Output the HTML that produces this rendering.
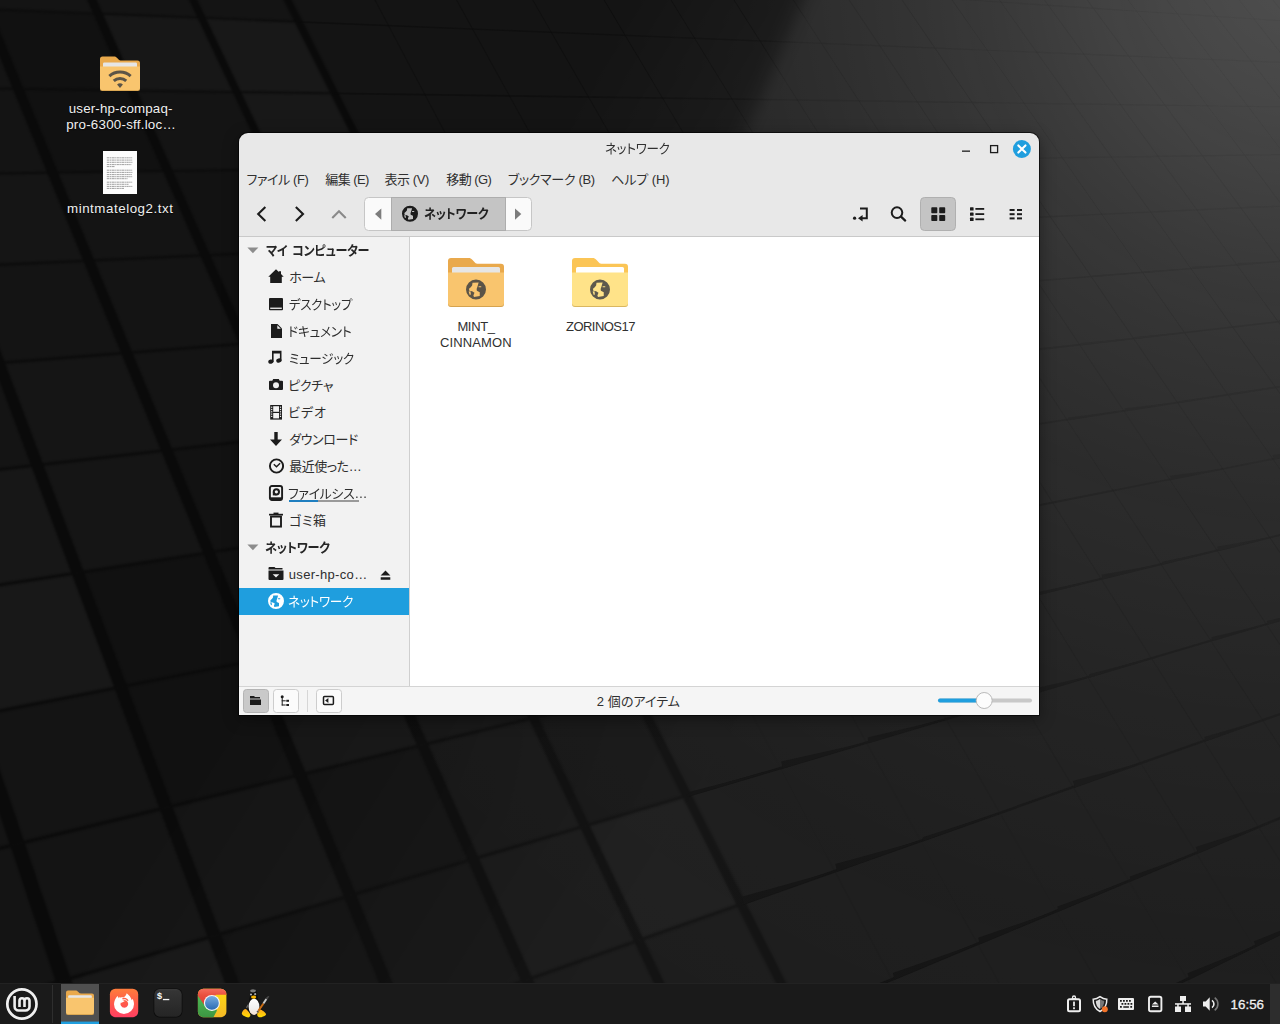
<!DOCTYPE html>
<html lang="ja">
<head>
<meta charset="utf-8">
<title>ネットワーク</title>
<style>
*{box-sizing:border-box;margin:0;padding:0}
html,body{width:1280px;height:1024px;overflow:hidden;background:#151515}
body{position:relative;font-family:"Liberation Sans","Noto Sans CJK JP",sans-serif;font-size:13px;color:#2e2e2e;font-feature-settings:"palt";-webkit-font-smoothing:antialiased}
.abs{position:absolute}
#wall{position:absolute;left:0;top:0;width:1280px;height:1024px}
/* desktop icons */
.dlabel{position:absolute;color:#f0f0f0;text-align:center;font-size:13.33px;line-height:16px;white-space:nowrap;text-shadow:0 1px 1px rgba(0,0,0,.7)}
/* window */
#win{position:absolute;left:239px;top:133px;width:800px;height:582px;background:#e8e8e8;border-radius:9px 9px 0 0;box-shadow:0 0 0 1px rgba(0,0,0,.6),0 4px 16px rgba(0,0,0,.4);overflow:hidden}
#title{position:absolute;left:0;top:0;width:800px;height:31px;text-align:center;line-height:30px;color:#303030}
#menubar{position:absolute;left:0;top:32px;height:28px;width:800px}
#menubar span{position:absolute;top:1px;line-height:28px;white-space:nowrap;color:#303030}
#toolbar{position:absolute;left:0;top:60px;width:800px;height:43px}
#hline{position:absolute;left:0;top:103px;width:800px;height:1px;background:#c9c9c9}
#side{position:absolute;left:0;top:104px;width:170px;height:449px;background:#f2f2f2}
#sep{position:absolute;left:170px;top:104px;width:1px;height:449px;background:#cfcfcf}
#content{position:absolute;left:171px;top:104px;width:629px;height:449px;background:#fff}
#status{position:absolute;left:0;top:553px;width:800px;height:29px;background:#f5f5f5;border-top:1px solid #d4d4d4}
.srow{position:absolute;left:0;width:170px;height:27px;line-height:27px;white-space:nowrap}
.srow .lb{position:absolute;left:50px;top:0}
.shead{position:absolute;left:26px;top:0;font-weight:bold;color:#262626;line-height:27px;height:27px;white-space:nowrap}
.ficon{position:absolute;text-align:center;color:#303030;line-height:16px;white-space:nowrap}
/* panel */
#panel{position:absolute;left:0;top:983px;width:1280px;height:41px;background:#1a1a1a;border-top:1px solid #222}
</style>
</head>
<body>
<svg id="wall" viewBox="0 0 1280 1024">
<defs>
<radialGradient id="lg" cx="1300" cy="-30" r="1200" gradientUnits="userSpaceOnUse">
<stop offset="0" stop-color="#fff" stop-opacity=".25"/><stop offset=".12" stop-color="#fff" stop-opacity=".215"/><stop offset=".23" stop-color="#fff" stop-opacity=".17"/><stop offset=".31" stop-color="#fff" stop-opacity=".14"/><stop offset=".39" stop-color="#fff" stop-opacity=".118"/><stop offset=".46" stop-color="#fff" stop-opacity=".1"/><stop offset=".62" stop-color="#fff" stop-opacity=".072"/><stop offset=".82" stop-color="#fff" stop-opacity=".05"/><stop offset="1" stop-color="#fff" stop-opacity=".04"/>
</radialGradient>
<linearGradient id="eg" gradientUnits="userSpaceOnUse" x1="432.100" y1="269.700" x2="872.900" y2="544.900">
<stop offset="0" stop-color="#000"/><stop offset="1" stop-color="#fff"/>
</linearGradient>
<linearGradient id="vf" gradientUnits="userSpaceOnUse" x1="0" y1="280" x2="0" y2="820">
<stop offset="0" stop-color="#fff" stop-opacity="1"/><stop offset="1" stop-color="#fff" stop-opacity="0"/>
</linearGradient>
<filter id="b1" color-interpolation-filters="sRGB" x="0" y="0" width="100%" height="100%"><feGaussianBlur stdDeviation="1.1"/></filter>
<filter id="b8" color-interpolation-filters="sRGB" x="-10%" y="-10%" width="120%" height="120%"><feGaussianBlur stdDeviation="9"/></filter>
<linearGradient id="gg" gradientUnits="userSpaceOnUse" x1="900" y1="800" x2="1250" y2="150">
<stop offset="0" stop-color="#fff"/><stop offset=".5" stop-color="#999"/><stop offset="1" stop-color="#6a6a6a"/>
</linearGradient>
<linearGradient id="gg2" gradientUnits="userSpaceOnUse" x1="700" y1="900" x2="1150" y2="250">
<stop offset="0" stop-color="#1a1a1a"/><stop offset=".5" stop-color="#444"/><stop offset="1" stop-color="#aaa"/>
</linearGradient>
<mask id="em" maskUnits="userSpaceOnUse" x="0" y="0" width="1280" height="1024"><rect width="1280" height="1024" fill="url(#eg)"/><polygon points="817,-30 1400,-30 1400,1100 312,1100" fill="url(#vf)" filter="url(#b8)"/></mask>
<mask id="gm2" maskUnits="userSpaceOnUse" x="0" y="0" width="1280" height="1024"><rect width="1280" height="1024" fill="url(#gg2)"/></mask>
<mask id="gm" maskUnits="userSpaceOnUse" x="0" y="0" width="1280" height="1024"><rect width="1280" height="1024" fill="url(#gg)"/></mask>
</defs>
<rect width="1280" height="1024" fill="#141414"/>
<path d="M-226 620L-67 595L-26 716L-189 748Z" fill="#000" fill-opacity="0.15"/><path d="M-105 1030L63 980L112 1126L-59 1187Z" fill="#000" fill-opacity="0.15"/><path d="M-208 177L-72 175L-37 266L-175 273Z" fill="#fff" fill-opacity="0.02"/><path d="M-175 273L-37 266L-1 363L-141 374Z" fill="#000" fill-opacity="0.15"/><path d="M-105 482L37 465L78 573L-67 595Z" fill="#fff" fill-opacity="0.014"/><path d="M-67 595L78 573L121 687L-26 716Z" fill="#fff" fill-opacity="0.02"/><path d="M63 980L214 936L266 1072L112 1126Z" fill="#fff" fill-opacity="0.014"/><path d="M-72 175L53 173L89 261L-37 266Z" fill="#fff" fill-opacity="0.008"/><path d="M-1 363L127 353L167 450L37 465Z" fill="#fff" fill-opacity="0.008"/><path d="M37 465L167 450L209 553L78 573Z" fill="#fff" fill-opacity="0.008"/><path d="M78 573L209 553L254 661L121 687Z" fill="#000" fill-opacity="0.1"/><path d="M121 687L254 661L300 775L166 808Z" fill="#000" fill-opacity="0.15"/><path d="M214 936L350 896L403 1024L266 1072Z" fill="#000" fill-opacity="0.15"/><path d="M-76 -140L34 -130L65 -60L-46 -67Z" fill="#fff" fill-opacity="0.008"/><path d="M-14 9L98 14L132 91L18 89Z" fill="#000" fill-opacity="0.1"/><path d="M18 89L132 91L168 171L53 173Z" fill="#000" fill-opacity="0.15"/><path d="M167 450L285 436L329 534L209 553Z" fill="#000" fill-opacity="0.06"/><path d="M209 553L329 534L374 637L254 661Z" fill="#000" fill-opacity="0.06"/><path d="M254 661L374 637L422 745L300 775Z" fill="#fff" fill-opacity="0.008"/><path d="M300 775L422 745L473 859L350 896Z" fill="#000" fill-opacity="0.1"/><path d="M350 896L473 859L527 980L403 1024Z" fill="#000" fill-opacity="0.06"/><path d="M34 -130L136 -121L168 -53L65 -60Z" fill="#fff" fill-opacity="0.008"/><path d="M98 14L202 18L237 92L132 91Z" fill="#fff" fill-opacity="0.014"/><path d="M168 171L274 169L312 250L205 255Z" fill="#000" fill-opacity="0.06"/><path d="M205 255L312 250L352 335L244 344Z" fill="#000" fill-opacity="0.06"/><path d="M285 436L394 424L438 517L329 534Z" fill="#fff" fill-opacity="0.008"/><path d="M329 534L438 517L485 615L374 637Z" fill="#000" fill-opacity="0.06"/><path d="M473 859L585 826L639 940L527 980Z" fill="#fff" fill-opacity="0.008"/><path d="M136 -121L231 -113L264 -47L168 -53Z" fill="#fff" fill-opacity="0.014"/><path d="M202 18L298 22L334 93L237 92Z" fill="#fff" fill-opacity="0.02"/><path d="M237 92L334 93L372 168L274 169Z" fill="#fff" fill-opacity="0.02"/><path d="M274 169L372 168L411 246L312 250Z" fill="#fff" fill-opacity="0.02"/><path d="M352 335L452 327L494 412L394 424Z" fill="#000" fill-opacity="0.1"/><path d="M394 424L494 412L539 501L438 517Z" fill="#fff" fill-opacity="0.014"/><path d="M485 615L586 595L635 693L533 718Z" fill="#fff" fill-opacity="0.02"/><path d="M533 718L635 693L687 796L585 826Z" fill="#000" fill-opacity="0.06"/><path d="M585 826L687 796L741 904L639 940Z" fill="#fff" fill-opacity="0.014"/>
<g filter="url(#b1)"><path d="M-818 -368L-803 -366L-282 2232L-306 2247ZM-658 -347L-645 -345L-38 2072L-58 2085ZM-512 -327L-500 -326L172 1935L155 1946ZM-377 -309L-366 -308L355 1816L339 1826ZM-253 -293L-242 -291L514 1711L501 1720ZM-137 -277L-127 -276L655 1619L643 1627ZM-29 -263L-20 -262L781 1537L770 1544ZM71 -250L79 -249L893 1464L884 1470ZM165 -237L173 -236L995 1398L986 1403Z" fill="#0a0a0a"/><path d="M-810.5 -367.8L168.2 -237.6L168.9 -236.2L-810.1 -365.9ZM-794.7 -288.2L198.8 -176.7L199.5 -175.2L-794.3 -286.2ZM-778.1 -204.3L230.5 -113.4L231.3 -111.8L-777.7 -202.2ZM-760.6 -115.7L263.6 -47.5L264.4 -45.9L-760.1 -113.5ZM-742.0 -22.1L298.0 21.1L298.9 22.7L-741.6 -19.7ZM-722.4 77.2L333.9 92.5L334.8 94.3L-721.9 79.6ZM-701.5 182.4L371.3 167.1L372.2 168.9L-701.0 185.1ZM-679.4 294.4L410.4 244.9L411.3 246.8L-678.8 297.1ZM-655.8 413.5L451.2 326.2L452.2 328.2L-655.2 416.5ZM-630.6 540.7L493.9 411.3L494.9 413.4L-630.0 543.9ZM-603.7 676.7L538.6 500.3L539.7 502.5L-603.0 680.1ZM-574.8 822.6L585.4 593.7L586.6 596.0L-574.1 826.2ZM-543.8 979.3L634.6 691.6L635.8 694.1L-543.0 983.2ZM-510.4 1148.2L686.2 794.6L687.5 797.1L-509.5 1152.4ZM-474.2 1330.7L740.6 902.8L741.9 905.5L-473.3 1335.2ZM-435.1 1528.5L797.8 1016.9L799.2 1019.7L-434.1 1533.5ZM-392.4 1743.8L858.2 1137.2L859.7 1140.2L-391.4 1749.1ZM-345.9 1978.8L922.0 1264.3L923.5 1267.4L-344.7 1984.7ZM-294.9 2236.4L989.4 1398.7L991.1 1402.0L-293.6 2242.9Z" fill="#0b0b0b"/></g>
<g mask="url(#gm2)"><path d="M255.5 -225.3L256.7 -225.2L1083.0 1339.8L1081.7 1340.6ZM337.7 -214.4L338.8 -214.3L1166.7 1285.1L1165.6 1285.8ZM415.0 -204.2L416.0 -204.0L1243.2 1235.2L1242.1 1235.8ZM487.8 -194.5L488.8 -194.4L1313.3 1189.3L1312.3 1190.0ZM556.5 -185.4L557.4 -185.2L1377.8 1147.2L1377.0 1147.7ZM621.5 -176.7L622.4 -176.6L1437.4 1108.2L1436.6 1108.8ZM683.0 -168.6L683.8 -168.5L1492.6 1072.2L1491.9 1072.7ZM741.3 -160.8L742.1 -160.7L1543.9 1038.7L1543.2 1039.1ZM796.7 -153.5L797.5 -153.4L1591.7 1007.5L1591.0 1007.9ZM849.4 -146.5L850.1 -146.4L1636.2 978.3L1635.6 978.7ZM899.5 -139.8L900.2 -139.7L1678.0 951.1L1677.4 951.5ZM947.2 -133.5L947.9 -133.4L1717.1 925.5L1716.6 925.9ZM992.8 -127.4L993.4 -127.4L1753.8 901.5L1753.3 901.8ZM1036.4 -121.7L1037.0 -121.6L1788.4 878.9L1788.0 879.2ZM1078.0 -116.1L1078.6 -116.1L1821.1 857.6L1820.6 857.9ZM1117.8 -110.8L1118.4 -110.8L1851.9 837.4L1851.5 837.7ZM1156.0 -105.8L1156.5 -105.7L1881.1 818.4L1880.7 818.7ZM1192.6 -100.9L1193.1 -100.9L1908.7 800.3L1908.3 800.6ZM1227.7 -96.3L1228.2 -96.2L1934.9 783.2L1934.5 783.4ZM1261.4 -91.8L1261.9 -91.7L1959.8 766.9L1959.5 767.2ZM1293.8 -87.5L1294.3 -87.4L1983.5 751.5L1983.2 751.7ZM1325.0 -83.3L1325.5 -83.3L2006.1 736.7L2005.8 736.9Z" fill="#0a0a0a"/></g>
<g mask="url(#gm)"><path d="M168.2 -237.6L1324.9 -83.7L1325.6 -82.9L168.9 -236.2ZM198.8 -176.7L1355.5 -46.9L1356.2 -46.0L199.5 -175.2ZM230.5 -113.4L1386.8 -9.2L1387.5 -8.2L231.3 -111.8ZM263.6 -47.5L1418.8 29.4L1419.6 30.3L264.4 -45.9ZM298.0 21.1L1451.5 68.9L1452.3 69.8L298.9 22.7ZM333.9 92.5L1485.1 109.3L1485.9 110.2L334.8 94.3ZM371.3 167.1L1519.4 150.6L1520.2 151.6L372.2 168.9ZM410.4 244.9L1554.5 193.0L1555.4 194.0L411.3 246.8ZM451.2 326.2L1590.5 236.3L1591.4 237.4L452.2 328.2ZM493.9 411.3L1627.4 280.8L1628.3 281.8L494.9 413.4ZM538.6 500.3L1665.2 326.3L1666.1 327.4L539.7 502.5ZM585.4 593.7L1704.0 373.0L1704.9 374.2L586.6 596.0ZM634.6 691.6L1743.7 420.9L1744.7 422.1L635.8 694.1ZM686.2 794.6L1784.5 470.0L1785.5 471.2L687.5 797.1ZM740.6 902.8L1826.4 520.5L1827.4 521.7L741.9 905.5ZM797.8 1016.9L1869.3 572.2L1870.4 573.5L799.2 1019.7ZM858.2 1137.2L1913.5 625.4L1914.5 626.7L859.7 1140.2ZM922.0 1264.3L1958.8 680.0L1959.9 681.3L923.5 1267.4ZM989.4 1398.7L2005.4 736.1L2006.5 737.5L991.1 1402.0Z" fill="#0a0a0a" fill-opacity=".9"/><path d="M631.5 313.8L707.7 307.3L707.3 306.6L631.5 310.8ZM711.0 307.4L782.1 301.4L781.8 300.7L711.5 305.4ZM854.7 296.0L917.0 290.7L916.6 290.1L854.7 293.7ZM919.7 290.8L978.3 285.8L977.9 285.2L919.7 288.6ZM980.9 285.9L1036.0 281.2L1035.6 280.6L980.2 283.0ZM1092.6 277.0L1141.7 272.8L1141.3 272.3L1092.7 275.4ZM1143.9 272.9L1190.2 268.9L1189.9 268.4L1143.8 271.4ZM1192.3 269.1L1236.2 265.3L1235.9 264.8L1191.5 266.5ZM1238.2 265.4L1279.9 261.8L1279.5 261.3L1237.4 262.9ZM1281.8 262.0L1321.3 258.5L1320.9 258.0L1281.6 260.5ZM589.2 402.2L671.3 392.3L670.9 391.6L589.1 398.5ZM674.9 392.3L751.2 383.0L750.8 382.3L675.4 390.1ZM828.7 374.5L895.1 366.4L894.7 365.7L828.8 372.0ZM963.0 358.9L1021.3 351.8L1020.9 351.2L962.9 356.6ZM1023.9 351.8L1078.7 345.1L1078.3 344.5L1023.7 349.6ZM1081.1 345.2L1132.7 338.9L1132.3 338.3L1080.9 343.1ZM1135.0 338.9L1183.7 333.0L1183.3 332.4L1134.7 336.9ZM1279.5 322.2L1320.7 317.1L1320.3 316.6L1278.8 320.0ZM634.3 487.6L716.6 474.4L716.2 473.6L634.0 483.4ZM720.1 474.3L796.5 462.0L796.1 461.3L719.3 469.4ZM799.8 461.9L870.9 450.4L870.5 449.7L799.7 458.9ZM874.0 450.4L940.2 439.7L939.8 439.0L873.7 447.3ZM943.1 439.6L1005.1 429.6L1004.7 429.0L942.8 436.7ZM1068.4 420.2L1122.9 411.3L1122.5 410.7L1067.9 417.4ZM1125.3 411.3L1176.6 403.0L1176.2 402.4L1124.5 408.3ZM1178.9 403.0L1227.2 395.2L1226.8 394.6L1178.8 401.2ZM1229.3 395.2L1274.9 387.8L1274.5 387.2L1229.2 393.4ZM588.4 595.4L677.7 577.2L677.2 576.4L587.2 588.8ZM681.5 577.0L763.9 560.1L763.5 559.3L680.1 570.7ZM767.5 559.9L843.8 544.3L843.4 543.5L767.4 556.5ZM847.1 544.1L918.0 529.6L917.6 528.9L846.5 540.0ZM921.1 529.4L987.1 515.9L986.7 515.2L920.4 525.5ZM990.0 515.8L1051.7 503.1L1051.3 502.5L989.2 512.0ZM1171.2 479.9L1222.0 469.4L1221.6 468.8L1169.7 475.8ZM1274.3 459.4L1319.3 450.1L1318.9 449.6L1272.3 455.0ZM637.6 693.4L727.1 670.9L726.6 670.0L636.8 687.4ZM816.9 649.4L893.1 630.2L892.7 629.4L816.8 645.8ZM896.4 629.9L967.1 612.1L966.7 611.4L895.2 624.7ZM1038.9 595.0L1100.1 579.5L1099.7 578.8L1038.4 591.9ZM1102.8 579.3L1160.1 564.9L1159.6 564.2L1101.4 574.7ZM1162.7 564.7L1216.3 551.1L1215.8 550.4L1162.1 561.8ZM1218.7 550.9L1269.0 538.2L1268.6 537.6L1217.1 546.7ZM689.3 796.3L778.9 769.2L778.4 768.3L689.4 792.1ZM782.7 768.6L865.1 743.6L864.6 742.8L781.1 761.6ZM868.7 743.1L944.7 720.0L944.2 719.2L867.4 737.4ZM1021.5 697.8L1086.8 677.9L1086.3 677.1L1019.5 691.7ZM1089.7 677.5L1150.5 659.0L1150.0 658.3L1089.2 674.2ZM1212.5 641.1L1265.6 624.9L1265.1 624.2L1211.4 637.3ZM1268.0 624.7L1317.7 609.5L1317.3 608.8L1266.8 621.0ZM743.7 904.6L833.3 872.3L832.8 871.4L742.1 896.7ZM837.1 871.6L919.3 841.9L918.8 841.0L835.3 864.1ZM922.9 841.3L998.6 813.9L998.1 813.1L922.6 837.2ZM1075.0 787.5L1139.8 764.1L1139.3 763.3L1072.8 781.1ZM1205.7 741.3L1261.8 721.0L1261.3 720.3L1204.5 737.1ZM801.1 1018.7L890.5 980.8L889.9 979.8L799.2 1010.3ZM894.3 979.8L976.2 945.1L975.7 944.1L892.9 973.0ZM979.8 944.2L1055.1 912.3L1054.5 911.4L978.2 937.8ZM1058.4 911.5L1127.8 882.0L1127.3 881.1L1057.3 906.4ZM1130.9 881.3L1195.1 854.0L1194.6 853.2L1129.7 876.4ZM1198.0 853.4L1257.6 828.0L1257.1 827.2L1195.6 846.9ZM1117.5 1014.4L1186.3 980.3L1185.8 979.4L1115.1 1006.8ZM1189.4 979.4L1252.9 947.9L1252.4 947.0L1187.5 973.2ZM1255.7 947.1L1314.6 917.9L1314.1 917.1L1253.8 941.2Z" fill="#0b0b0b"/></g>
<rect width="1280" height="1024" fill="url(#lg)" mask="url(#em)"/>
</svg>

<!-- desktop icons -->
<svg class="abs" style="left:99px;top:55px" width="42" height="38" viewBox="0 0 42 38">
<path d="M1 4a2.500 2.500 0 0 1 2.500-2.500h11.500c1.300 0 2 .400 2.900 1.300l1.700 1.700c.800.800 1.400 1.100 2.700 1.100H38.500A2.500 2.500 0 0 1 41 8.100V14H1z" fill="#e9a94c"/>
<rect x="4" y="7.500" width="34" height="7" rx="1.200" fill="#e6e6e6"/>
<path d="M1 11.500h40V33.500a2.500 2.500 0 0 1-2.500 2.500H3.500A2.500 2.500 0 0 1 1 33.500z" fill="#f9c56e"/>
<path d="M1 33V33.500a2.500 2.500 0 0 0 2.500 2.500H38.500a2.500 2.500 0 0 0 2.500-2.500V33a2.500 2.500 0 0 1-2.500 2.200H3.500A2.500 2.500 0 0 1 1 33z" fill="rgba(150,100,20,.4)"/>
<g fill="none" stroke="#5b5447" stroke-width="3">
<path d="M10.360 21.080A15.900 15.900 0 0 1 31.640 21.080"/><path d="M14.780 25.990A9.300 9.300 0 0 1 27.220 25.990"/>
</g>
<path d="M21 32.900L18.050 29.600A4.400 4.400 0 0 1 23.950 29.600Z" fill="#5b5447"/>
</svg>
<div class="dlabel" id="d1a" style="left:68.8px;top:101px;letter-spacing:0.15px">user-hp-compaq-</div><div class="dlabel" id="d1b" style="left:66.2px;top:117px;letter-spacing:0.24px">pro-6300-sff.loc…</div>
<svg class="abs" style="left:103px;top:151px" width="34" height="43" viewBox="0 0 34 43">
<rect width="34" height="43" fill="#fcfcfc"/>
<g fill="none" stroke="#4a4a4a" stroke-opacity=".8" stroke-width=".650" stroke-dasharray="2.300 .500 1.500 .500 3.100 .500 .900 .500"><path d="M3.800 6.8H29.2"/><path d="M3.800 9.1H29.2"/><path d="M3.800 11.3H29.4"/><path d="M3.800 13.6H28.5"/><path d="M3.800 15.6H11.5"/><path d="M3.800 19.2H29.2"/><path d="M3.800 21.4H29.4"/><path d="M3.800 23.6H29.0"/><path d="M3.800 25.7H29.2"/><path d="M3.800 27.7H24.5"/><path d="M3.800 31.2H29.2"/><path d="M3.800 33.3H25.5"/><path d="M3.800 35.4H29.3"/><path d="M3.800 37.4H21.0"/></g></svg>
<div class="dlabel" id="d2" style="left:67.0px;top:201px;letter-spacing:0.54px">mintmatelog2.txt</div>

<div id="win">
<div id="title"><span class="abs" id="ttl" style="left:366.4px;top:1px;transform-origin:0 50%;transform:scaleX(0.963);letter-spacing:-0.3px;white-space:nowrap">ネットワーク</span></div>
<svg class="abs" style="left:700px;top:0" width="100" height="32" viewBox="939 133 100 32">
<rect x="962" y="150.5" width="8" height="1.3" fill="#1c1c1c"/>
<rect x="990.6" y="145.6" width="7" height="7" fill="none" stroke="#1c1c1c" stroke-width="1.3"/>
<circle cx="1021.9" cy="149" r="9" fill="#1f9ede"/>
<path d="M1018.3 145.4l7.2 7.2M1025.5 145.4l-7.2 7.2" stroke="#fff" stroke-width="2.1" stroke-linecap="round"/>
</svg>
<div id="menubar">
<span id="m1" style="left:7.4px;letter-spacing:-0.39px">ファイル (F)</span>
<span id="m2" style="left:86.2px;letter-spacing:-0.54px">編集 (E)</span>
<span id="m3" style="left:145.4px;letter-spacing:-0.38px">表示 (V)</span>
<span id="m4" style="left:207.2px;letter-spacing:-0.54px">移動 (G)</span>
<span id="m5" style="left:268.8px;letter-spacing:-0.34px">ブックマーク (B)</span>
<span id="m6" style="left:372.2px;letter-spacing:-0.09px">ヘルプ (H)</span>
</div>
<div id="toolbar">
<svg class="abs" style="left:0;top:0" width="800" height="43" viewBox="239 193 800 43">
<g fill="none" stroke="#1c1c1c" stroke-width="2.1" stroke-linecap="square" stroke-linejoin="miter">
<polyline points="264.6,207.8 258.2,214 264.6,220.2"/>
<polyline points="296.6,207.8 303,214 296.6,220.2"/>
<polyline points="333,217.3 339,211.3 345,217.3" stroke="#8a8a8a"/>
</g>
<rect x="364.5" y="197.5" width="167" height="33" rx="4" fill="#fafafa" stroke="#c6c6c6"/>
<rect x="391.5" y="197.5" width="114" height="33" fill="#c4c4c4" stroke="#adadad"/>
<polygon points="381.3,208.5 381.3,219.8 375,214.1" fill="#7c7c7c"/>
<polygon points="515,208.5 515,219.8 521.3,214.1" fill="#7c7c7c"/>
<g transform="translate(402,205.75)"><path fill="#1c1c1c" fill-rule="evenodd" d="M8 0a8 8 0 1 0 0 16a8 8 0 1 0 0-16zM5.2 2.6L10.1 2.4L9.2 5.6L8.5 7.5L8.7 8.9L11 10.1L11 13.2L6.4 13.9L5.9 12.7L6.8 10.6L4.9 9.4L2.6 8.9L2.4 7.3L3.8 6.1L4.9 4.7ZM10.1 5.3h2.1v.9h-2.1zM2.1 9.6L3.6 9.4L3.9 12L3 12.3z"/></g>
<!-- toggle location -->
<g fill="#1c1c1c"><circle cx="854.6" cy="218.2" r="1.6"/><path d="M860 207.5h7.8v11.8h-5.2v2.3l-4.6-3.3 4.6-3.3v2.3h3.2v-7.8h-5.8z"/></g>
<!-- search -->
<circle cx="897" cy="212.6" r="5.3" fill="none" stroke="#1c1c1c" stroke-width="2"/>
<line x1="901" y1="216.6" x2="905.2" y2="220.6" stroke="#1c1c1c" stroke-width="2.2" stroke-linecap="round"/>
<!-- grid button -->
<rect x="920.5" y="197.5" width="35" height="33" rx="4" fill="#c4c4c4" stroke="#b0b0b0"/>
<g fill="#1c1c1c">
<rect x="931.3" y="207.2" width="6" height="6" rx=".8"/><rect x="939.2" y="207.2" width="6" height="6" rx=".8"/>
<rect x="931.3" y="215" width="6" height="6" rx=".8"/><rect x="939.2" y="215" width="6" height="6" rx=".8"/>
<!-- list -->
<rect x="970" y="207.2" width="3.6" height="3.4" rx=".6"/><rect x="975.4" y="208" width="8.8" height="1.8"/>
<rect x="970" y="212.4" width="3.6" height="3.4" rx=".6"/><rect x="975.4" y="213.2" width="8.8" height="1.8"/>
<rect x="970" y="217.6" width="3.6" height="3.4" rx=".6"/><rect x="975.4" y="218.4" width="8.8" height="1.8"/>
<!-- compact -->
<rect x="1009.6" y="209" width="5" height="2"/><rect x="1017" y="209" width="5" height="2"/>
<rect x="1009.6" y="213.2" width="5" height="2"/><rect x="1017" y="213.2" width="5" height="2"/>
<rect x="1009.6" y="217.4" width="5" height="2"/><rect x="1017" y="217.4" width="5" height="2"/>
</g>
</svg>
<div class="abs" id="pb" style="left:185.0px;top:5px;transform-origin:0 50%;transform:scaleX(0.928);letter-spacing:-0.3px;height:33px;line-height:32px;font-weight:bold;color:#222;white-space:nowrap">ネットワーク</div>
</div>
<div id="hline"></div>
<div id="side">
<div class="srow" style="top:0"><svg class="abs" style="left:8px;top:10px" width="12" height="8" viewBox="0 0 12 8"><path d="M.400 .5h11L5.900 6.200z" fill="#8c8c8c"/></svg><span class="shead" id="sh1" style="word-spacing:1.5px;left:27.2px;transform-origin:0 50%;transform:scaleX(0.931);letter-spacing:-0.3px">マイ コンピューター</span></div>
<div class="srow" style="top:27px"><svg class="abs" style="left:29px;top:5px" width="16" height="16" viewBox="0 0 16 16"><path fill="#1c1c1c" d="M8 .2L.3 7.7h1.9V14h11.6V7.7h1.9L13 5.1V2.2h-2.1v.9z"/></svg><span class="lb" id="s1" style="left:50.2px;letter-spacing:-0.43px">ホーム</span></div>
<div class="srow" style="top:54px"><svg class="abs" style="left:29px;top:5px" width="16" height="16" viewBox="0 0 16 16"><rect x="1" y="2" width="14" height="12.2" rx="1" fill="#1c1c1c"/><rect x="2.2" y="11.6" width="11.6" height="1.3" fill="#f2f2f2"/></svg><span class="lb" id="s2" style="left:50.2px;transform-origin:0 50%;transform:scaleX(0.956);letter-spacing:-0.3px">デスクトップ</span></div>
<div class="srow" style="top:81px"><svg class="abs" style="left:29px;top:5px" width="16" height="16" viewBox="0 0 16 16"><path fill="#1c1c1c" d="M3 1h6.5L14 5.5V15H3z"/><path fill="#f2f2f2" d="M9.3 2.2L12.8 5.7H9.3z"/></svg><span class="lb" id="s3" style="left:49.4px;transform-origin:0 50%;transform:scaleX(0.982);letter-spacing:-0.3px">ドキュメント</span></div>
<div class="srow" style="top:108px"><svg class="abs" style="left:29px;top:5px" width="16" height="16" viewBox="0 0 16 16"><path fill="#1c1c1c" d="M4 .8h9.5v9.9h-1.6V3.6H5.6v8.2H4z"/><ellipse cx="2.9" cy="11.6" rx="2.7" ry="2.1" fill="#1c1c1c" transform="rotate(-15 2.9 11.6)"/><ellipse cx="10.9" cy="10.5" rx="2.7" ry="2.1" fill="#1c1c1c" transform="rotate(-15 10.9 10.5)"/></svg><span class="lb" id="s4" style="left:50.4px;transform-origin:0 50%;transform:scaleX(0.969);letter-spacing:-0.3px">ミュージック</span></div>
<div class="srow" style="top:135px"><svg class="abs" style="left:29px;top:5px" width="16" height="16" viewBox="0 0 16 16"><path fill="#1c1c1c" d="M5.2 2h5.6l.9 1.8H14a1 1 0 0 1 1 1V12a1 1 0 0 1-1 1H2a1 1 0 0 1-1-1V4.8a1 1 0 0 1 1-1h2.3z"/><circle cx="8" cy="8.2" r="3" fill="#eee"/></svg><span class="lb" id="s5" style="left:49.0px;letter-spacing:-0.24px">ピクチャ</span></div>
<div class="srow" style="top:162px"><svg class="abs" style="left:29px;top:5px" width="16" height="16" viewBox="0 0 16 16"><rect x="2.2" y="1" width="11.8" height="14.6" fill="#1c1c1c"/><rect x="5.2" y="2.2" width="5.8" height="5.6" fill="#f2f2f2"/><rect x="5.2" y="9" width="5.8" height="5.4" fill="#f2f2f2"/><g fill="#f2f2f2"><rect x="3.1" y="2.6" width="1.2" height="1.2"/><rect x="3.1" y="4.9" width="1.2" height="1.2"/><rect x="3.1" y="7.2" width="1.2" height="1.2"/><rect x="3.1" y="9.5" width="1.2" height="1.2"/><rect x="3.1" y="11.8" width="1.2" height="1.2"/><rect x="11.9" y="2.6" width="1.2" height="1.2"/><rect x="11.9" y="4.9" width="1.2" height="1.2"/><rect x="11.9" y="7.2" width="1.2" height="1.2"/><rect x="11.9" y="9.5" width="1.2" height="1.2"/><rect x="11.9" y="11.8" width="1.2" height="1.2"/></g></svg><span class="lb" id="s6" style="left:49.0px;letter-spacing:0.88px">ビデオ</span></div>
<div class="srow" style="top:189px"><svg class="abs" style="left:29px;top:5px" width="16" height="16" viewBox="0 0 16 16"><path fill="#1c1c1c" d="M6.3 1h3.4v7.4H14L8 15 2 8.4h4.3z"/></svg><span class="lb" id="s7" style="left:50.2px;letter-spacing:-0.38px">ダウンロード</span></div>
<div class="srow" style="top:216px"><svg class="abs" style="left:29px;top:5px" width="16" height="16" viewBox="0 0 16 16"><circle cx="8.5" cy="8" r="6.600" fill="none" stroke="#1c1c1c" stroke-width="1.900"/><path d="M5.8 6.2l2.7 2.6 3.6-3.6" fill="none" stroke="#1c1c1c" stroke-width="1.4"/></svg><span class="lb" id="s8" style="left:50.2px;letter-spacing:-0.46px">最近使った…</span></div>
<div class="srow" style="top:243px"><svg class="abs" style="left:29px;top:5px" width="16" height="16" viewBox="0 0 16 16"><rect x="1.900" y="1" width="12.200" height="14" rx="2" fill="none" stroke="#1c1c1c" stroke-width="1.900"/><rect x="2" y="12.300" width="12" height="2.700" fill="#1c1c1c"/><circle cx="8.400" cy="6.800" r="3.600" fill="#1c1c1c"/><rect x="4.800" y="6.800" width="3.600" height="3.600" fill="#1c1c1c"/><circle cx="8.400" cy="6.800" r="1.600" fill="#f2f2f2"/></svg><span class="lb" id="s9" style="left:49.4px;transform-origin:0 50%;transform:scaleX(0.993);letter-spacing:-0.3px">ファイルシス…</span></div>
<div class="srow" style="top:270px"><svg class="abs" style="left:29px;top:5px" width="16" height="16" viewBox="0 0 16 16"><rect x="1" y="1.8" width="14" height="1.7" fill="#1c1c1c"/><rect x="5.5" y=".6" width="5" height="1.6" fill="#1c1c1c"/><rect x="3" y="4.6" width="10" height="10" fill="none" stroke="#1c1c1c" stroke-width="1.9"/></svg><span class="lb" id="s10" style="left:50.2px;letter-spacing:0.46px">ゴミ箱</span></div>
<div class="abs" style="left:50px;top:263px;width:29px;height:2px;background:#1f7fc0"></div><div class="abs" style="left:79px;top:263px;width:41px;height:2px;background:#9a9a9a"></div>
<div class="srow" style="top:297px"><svg class="abs" style="left:8px;top:10px" width="12" height="8" viewBox="0 0 12 8"><path d="M.400 .5h11L5.900 6.200z" fill="#8c8c8c"/></svg><span class="shead" id="sh2" style="left:25.8px;transform-origin:0 50%;transform:scaleX(0.934);letter-spacing:-0.3px">ネットワーク</span></div>
<div class="srow" style="top:324px"><svg class="abs" style="left:29px;top:5px" width="16" height="16" viewBox="0 0 16 16"><path fill="#1c1c1c" d="M1.5 1h5l1 1h7v1.6H.5V2a1 1 0 0 1 1-1zM.5 4.600h15V13a1 1 0 0 1-1 1H1.500a1 1 0 0 1-1-1z"/><path fill="#f2f2f2" d="M4.700 8.200h6.600L8 11.600z"/></svg><span class="lb" id="s11" style="left:49.8px;letter-spacing:0.32px">user-hp-co…</span><svg class="abs" style="left:141px;top:9px" width="11" height="11" viewBox="0 0 11 11"><path fill="#1c1c1c" d="M5.500 .500L10.400 5.600H.600zM.700 7.200h9.600v2.600H.700z"/></svg></div>
<div class="srow" style="top:351px;background:#1f9ede;color:#fff"><svg class="abs" style="left:29px;top:5px" width="16" height="16" viewBox="0 0 16 16"><path fill="#fff" fill-rule="evenodd" d="M8 0a8 8 0 1 0 0 16a8 8 0 1 0 0-16zM5.2 2.6L10.1 2.4L9.2 5.6L8.5 7.5L8.7 8.9L11 10.1L11 13.2L6.4 13.9L5.9 12.7L6.8 10.6L4.9 9.4L2.6 8.9L2.4 7.3L3.8 6.1L4.9 4.7ZM10.1 5.3h2.1v.9h-2.1zM2.1 9.6L3.6 9.4L3.9 12L3 12.3z"/></svg><span class="lb" id="s12" style="left:49.0px;transform-origin:0 50%;transform:scaleX(0.973);letter-spacing:-0.3px">ネットワーク</span></div>
</div>
<div id="sep"></div>
<div id="content">
<svg class="abs" style="left:37px;top:20px" width="58" height="52" viewBox="0 0 58 52">
<path d="M1 4a3 3 0 0 1 3-3h17.500c1.800 0 2.600.600 3.800 1.800l2.600 2.600c1 1 1.800 1.400 3.400 1.400H54a3 3 0 0 1 3 3V20H1z" fill="#e9a94c"/>
<rect x="5" y="10" width="48" height="10" rx="1.500" fill="#e6e6e6"/>
<path d="M1 15.500h56V47a3 3 0 0 1-3 3H4a3 3 0 0 1-3-3z" fill="#f9c56e"/>
<path d="M1 46.500V47a3 3 0 0 0 3 3H54a3 3 0 0 0 3-3v-.500a3 3 0 0 1-3 2.500H4a3 3 0 0 1-3-2.500z" fill="rgba(150,100,20,.35)"/>
<g transform="translate(19 22.500) scale(1.25)"><path fill="#5b5447" fill-rule="evenodd" d="M8 0a8 8 0 1 0 0 16a8 8 0 1 0 0-16zM5.2 2.6L10.1 2.4L9.2 5.6L8.5 7.5L8.7 8.9L11 10.1L11 13.2L6.4 13.9L5.9 12.7L6.8 10.6L4.9 9.4L2.6 8.9L2.4 7.3L3.8 6.1L4.9 4.7ZM10.1 5.3h2.1v.9h-2.1zM2.1 9.6L3.6 9.4L3.9 12L3 12.3z"/></g>
</svg><svg class="abs" style="left:161px;top:20px" width="58" height="52" viewBox="0 0 58 52">
<path d="M1 4a3 3 0 0 1 3-3h17.500c1.800 0 2.600.600 3.800 1.800l2.600 2.600c1 1 1.800 1.400 3.400 1.400H54a3 3 0 0 1 3 3V20H1z" fill="#fbc556"/>
<rect x="5" y="10" width="48" height="10" rx="1.500" fill="#ffffff"/>
<path d="M1 15.500h56V47a3 3 0 0 1-3 3H4a3 3 0 0 1-3-3z" fill="#ffe389"/>
<path d="M1 46.500V47a3 3 0 0 0 3 3H54a3 3 0 0 0 3-3v-.500a3 3 0 0 1-3 2.500H4a3 3 0 0 1-3-2.500z" fill="rgba(150,100,20,.35)"/>
<g transform="translate(19 22.500) scale(1.25)"><path fill="#5e594d" fill-rule="evenodd" d="M8 0a8 8 0 1 0 0 16a8 8 0 1 0 0-16zM5.2 2.6L10.1 2.4L9.2 5.6L8.5 7.5L8.7 8.9L11 10.1L11 13.2L6.4 13.9L5.9 12.7L6.8 10.6L4.9 9.4L2.6 8.9L2.4 7.3L3.8 6.1L4.9 4.7ZM10.1 5.3h2.1v.9h-2.1zM2.1 9.6L3.6 9.4L3.9 12L3 12.3z"/></g>
</svg><div class="ficon" id="f1a" style="left:47.4px;top:82px;letter-spacing:-0.35px">MINT_</div><div class="ficon" id="f1b" style="left:30.0px;top:98px;letter-spacing:0.12px">CINNAMON</div>
<div class="ficon" id="f2" style="left:156.0px;top:82px;letter-spacing:-0.53px">ZORINOS17</div>
</div>
<div id="status">
<svg class="abs" style="left:0;top:0" width="800" height="28" viewBox="239 687 800 28">
<rect x="243.500" y="689.500" width="25" height="23" rx="3" fill="#c9c9c9" stroke="#b4b4b4"/>
<rect x="273.500" y="689.500" width="25" height="23" rx="3" fill="#fbfbfb" stroke="#cdcdcd"/>
<rect x="307" y="690" width="1" height="22" fill="#d6d6d6"/>
<rect x="316.500" y="689.500" width="25" height="23" rx="3" fill="#fbfbfb" stroke="#cdcdcd"/>
<path fill="#1c1c1c" d="M250 696h4l1 1h5v1.600h-10zM250 699.400h11v5.700H250z"/>
<g fill="#1c1c1c"><circle cx="282.200" cy="696.800" r="1.500"/><rect x="281.700" y="697" width="1" height="8.500"/><rect x="281.700" y="700.300" width="4" height="1"/><rect x="281.700" y="704.500" width="4" height="1"/><rect x="286.300" y="699.800" width="2.700" height="2"/><rect x="286.300" y="704" width="2.700" height="2"/></g>
<rect x="323.500" y="696.600" width="9.900" height="7.800" rx="1" fill="none" stroke="#1c1c1c" stroke-width="1.500"/>
<path fill="#1c1c1c" d="M328.400 698v5l-3.300-2.500z"/>
<rect x="938" y="698.500" width="94" height="4" rx="2" fill="#c8c8c8"/>
<rect x="938" y="698.500" width="47" height="4" rx="2" fill="#1f9ede"/>
<circle cx="984.200" cy="700.500" r="8" fill="#fcfcfc" stroke="#b9b9b9"/>
</svg>
<div class="abs" id="st" style="left:357.8px;top:1px;letter-spacing:0.07px;height:28px;line-height:27px;color:#303030;white-space:nowrap">2 個のアイテム</div>
</div>
</div>

<div id="panel">
<svg class="abs" style="left:0;top:-1px" width="1280" height="41" viewBox="0 983 1280 41">
<defs>
<linearGradient id="ffg" x1="0" y1="0" x2="0" y2="1"><stop offset="0" stop-color="#ff7d3c"/><stop offset=".5" stop-color="#ff5a4a"/><stop offset="1" stop-color="#ff3f62"/></linearGradient>
<linearGradient id="tmg" x1="0" y1="0" x2="0" y2="1"><stop offset="0" stop-color="#3a3a3a"/><stop offset=".08" stop-color="#343434"/><stop offset="1" stop-color="#252525"/></linearGradient>
<linearGradient id="chb" x1="0" y1="0" x2="0" y2="1"><stop offset="0" stop-color="#76abdf"/><stop offset="1" stop-color="#2a6bb3"/></linearGradient>
<linearGradient id="txb" x1="0" y1="0" x2="0" y2="1"><stop offset="0" stop-color="#fff"/><stop offset=".6" stop-color="#f1f1f1"/><stop offset="1" stop-color="#f6dfcf"/></linearGradient>
<linearGradient id="txf" x1="0" y1="0" x2="0" y2="1"><stop offset="0" stop-color="#ffa81e"/><stop offset="1" stop-color="#ffde00"/></linearGradient>
<clipPath id="chc"><rect x="197.900" y="988.700" width="28.500" height="28.500" rx="5.500"/></clipPath>
<linearGradient id="chy" x1="0" y1="0" x2="0" y2="1"><stop offset="0" stop-color="#ffdd10"/><stop offset="1" stop-color="#f4b827"/></linearGradient>
<linearGradient id="chr" x1="0" y1="0" x2="0" y2="1"><stop offset="0" stop-color="#f4705f"/><stop offset=".4" stop-color="#e9503f"/><stop offset="1" stop-color="#dc3a30"/></linearGradient>
<linearGradient id="chg" x1="0" y1="0" x2="0" y2="1"><stop offset="0" stop-color="#4fbb55"/><stop offset="1" stop-color="#3c9442"/></linearGradient>
</defs>
<rect x="1270" y="984" width="10" height="40" fill="#2d2d2d"/>
<!-- mint menu -->
<circle cx="21.900" cy="1004" r="14.600" fill="none" stroke="#f0f0f0" stroke-width="2.700"/>
<path d="M14.600 996V1006.500a4 4 0 0 0 4 4H25.500a4 4 0 0 0 4-4V1000.800a2.500 2.500 0 0 0-5 0V1007M24.500 1000.800a2.500 2.500 0 0 0-5 0V1007" fill="none" stroke="#f0f0f0" stroke-width="2.600"/>
<rect x="52" y="985" width="1" height="38" fill="#2e2e2e"/>
<!-- active window btn -->
<rect x="61" y="984" width="38" height="40" fill="#505050"/>
<rect x="61" y="1021.600" width="38" height="2.400" fill="#1f9ede"/>
<g transform="translate(66 990)">
<path d="M0 2.500a2 2 0 0 1 2-2h7.600c1 0 1.500.300 2.100.900l1.200 1.200c.600.600 1 .800 1.900.800H26a2 2 0 0 1 2 2V10H0z" fill="#e9a94c"/>
<rect x="2.200" y="5.200" width="23.600" height="5" rx="1" fill="#e6e6e6"/>
<path d="M0 7.700h28V23a2 2 0 0 1-2 2H2a2 2 0 0 1-2-2z" fill="#f9c56e"/>
<path d="M0 22.600V23a2 2 0 0 0 2 2H26a2 2 0 0 0 2-2v-.400a2 2 0 0 1-2 1.700H2a2 2 0 0 1-2-1.700z" fill="rgba(150,100,20,.4)"/>
</g>
<!-- firefox-like -->
<rect x="109.900" y="988.700" width="28.300" height="28.500" rx="5.500" fill="url(#ffg)"/>
<path fill="#fff" fill-rule="evenodd" d="M117.500 996C115.500 998 114 1001 114 1004.300A10 9.600 0 0 0 134 1004.300C134 1002.300 133.500 1000.300 132.600 998.700L131.800 1000.200C131 997.500 129 994.800 126.700 993.200C126.300 995 125 996.500 123.400 997.600C122.400 997.200 121.400 997.300 120.600 997.800L119.800 996.800L118.900 998.200ZM124.300 1000a3.900 3.900 0 1 0 .01 0z"/>
<path d="M119.600 1004c1.300-1.300 3.600-1.600 5.300-2.900l-3-1.100z" fill="#fff"/>
<path d="M122.400 998.900c1.800-.8 4.600-.5 5.600 1.900" fill="none" stroke="#ff6046" stroke-width="1.300"/>
<!-- terminal -->
<rect x="153.600" y="988.400" width="28.800" height="29" rx="6" fill="#0b0b0b"/>
<rect x="154.300" y="989.100" width="27.400" height="27.600" rx="5.400" fill="url(#tmg)"/>
<text x="156.800" y="998.800" font-family="Liberation Mono, monospace" font-weight="bold" font-size="9.200" fill="#f6f6f6">$</text>
<rect x="162.900" y="998.900" width="6.400" height="1.300" fill="#f6f6f6"/>
<!-- chrome -->
<g clip-path="url(#chc)">
<rect x="197" y="988" width="30" height="30" fill="url(#chy)"/>
<path d="M197 988h30v6.800H216L204 1006 197 998z" fill="url(#chr)"/>
<path d="M197 994.500L203.800 1004.200 212 1003 217 1010.600 213 1018H197z" fill="url(#chg)"/>
</g>
<circle cx="211.900" cy="1002.900" r="8" fill="#f7f7f7"/>
<circle cx="211.900" cy="1002.900" r="6.900" fill="url(#chb)"/>
<!-- tux -->
<g>
<path d="M245.500 1013c1.500-2 2.600-4.500 3.300-7.500.6-2.800.4-6.500 1.200-9.500.7-3.500 1.800-6.800 4-6.800 2 0 2.900 2.800 3.300 5.600.5 3 .7 6 2 8.700 1 2.300 2.700 4.300 3.200 6.800.4 2-1 3.700-3.500 4.200h-10c-3 0-4.700-1-3.500-1.500z" fill="#0c0c0c"/>
<ellipse cx="253" cy="990.800" rx="2.900" ry="1.600" fill="#7d7d7d"/>
<circle cx="251" cy="994.400" r="1" fill="#bdbdbd"/><circle cx="255.200" cy="994.200" r="1.100" fill="#a9a9a9"/>
<ellipse cx="254" cy="1006.800" rx="5.400" ry="8.100" fill="url(#txb)"/>
<ellipse cx="253.600" cy="997.100" rx="2.600" ry="1.700" fill="#f7b500"/>
<path d="M246 1007.500l1.700-3 .8.500-1.400 3.200z" fill="#6d6d6d"/>
<path d="M241.800 1013.200c.3-1.600 2-4.200 3.500-4.300 1.600.2 3.800 3.200 4.900 5.200.7 1.600-.3 3.300-2 3.300-2.200-.2-6.600-2-6.400-4.200z" fill="url(#txf)"/>
<path d="M257.200 1014.600c.1-2 1.500-5 3-5.100 1.800.3 5.300 3 5.900 4.600.2 1.600-3.600 3.200-6.200 3.200-1.600 0-2.800-1.200-2.700-2.700z" fill="url(#txf)"/>
<path d="M257.600 1010.300l5-7.400 1.600 1.100-5 7.400z" fill="#c86c14"/>
<path d="M257.300 1010.600l1.700 1.200-.8 1.100-1.700-1.200z" fill="#555"/>
<path d="M262.600 1002.900l2.900-4.500 1.700 1.100-3 4.500z" fill="#c9c9c9"/>
<path d="M265.500 998.400l1.600-1.700 2.300-.9-1 2.300-1.200 1.400z" fill="#4a4a4a"/>
</g>
<!-- tray -->
<g fill="none" stroke="#eee" stroke-width="1.700">
<rect x="1068" y="999.200" width="12" height="12" rx="1.500" stroke-width="2"/><circle cx="1074" cy="997.500" r="1.500" stroke-width="1.300"/>
<path d="M1093.200 999.200q3.600-.3 6.800-2.600q3.200 2.300 6.800 2.600q.3 8.500-6.800 12.300q-7.100-3.800-6.800-12.300z" stroke-width="1.500"/>
<rect x="1149" y="996.800" width="12.400" height="14.400" rx="1.800" stroke-width="1.900"/>
</g>
<g fill="#eee">
<rect x="1071.500" y="998.200" width="5" height="1.600"/>
<rect x="1073.100" y="1001.600" width="1.800" height="4.600"/><rect x="1073.100" y="1007.300" width="1.800" height="1.900"/>
<path d="M1095.800 1000.900q2.300-.4 4.200-1.800v9.900q-4.300-2.900-4.200-8.100z" fill="#d8d8d8"/>
<path d="M1104.200 1000.900q-2.300-.4-4.200-1.800v9.900q4.300-2.900 4.200-8.100z" fill="#777"/>
<!-- keyboard -->
<path fill-rule="evenodd" d="M1119 998h14a1 1 0 0 1 1 1v10a1 1 0 0 1-1 1h-14a1 1 0 0 1-1-1v-10a1 1 0 0 1 1-1zM1120 1000v1.800h1.800V1000zM1123 1000v1.800h1.800V1000zM1126 1000v1.800h1.800V1000zM1129 1000v1.800h1.800V1000zM1121.500 1003v1.800h1.800V1003zM1124.500 1003v1.800h1.800V1003zM1127.500 1003v1.800h1.800V1003zM1130.500 1003v1.800h1.800V1003zM1120 1006v1.800h1.800V1006zM1123.300 1006.200v1.500h5.600v-1.500zM1130.300 1006v1.800h1.800V1006z"/>
<!-- eject in removable -->
<path d="M1155.200 1001.500l3.300 3h-6.600zM1151.900 1005.600h6.600v1.400h-6.600z"/>
<!-- network -->
<rect x="1180" y="996" width="6" height="5"/><rect x="1182.300" y="1000" width="1.500" height="4"/><rect x="1175" y="1003.200" width="16" height="1.500"/><rect x="1177.200" y="1004" width="1.500" height="3"/><rect x="1187.300" y="1004" width="1.500" height="3"/>
<rect x="1175" y="1006.500" width="6" height="5.500"/><rect x="1185" y="1006.500" width="6" height="5.500"/>
<!-- volume -->
<path d="M1203 1001.500h2.700l4-4.200v13.400l-4-4.200H1203z"/>
</g>
<circle cx="1104.800" cy="1009.300" r="3" fill="#f37329"/>
<path d="M1212 1000.300a4.500 4.500 0 0 1 0 7.400" fill="none" stroke="#eee" stroke-width="1.600"/>
<path d="M1214.700 997.600a8 8 0 0 1 0 12.800" fill="none" stroke="#777" stroke-width="1.600"/>
</svg>
<div class="abs" id="clock" style="left:1230.6px;top:12px;letter-spacing:0.01px;line-height:18px;font-size:13.330px;color:#f0f0f0;white-space:nowrap;-webkit-text-stroke:.3px #f0f0f0">16:56</div>
</div>
</body>
</html>
